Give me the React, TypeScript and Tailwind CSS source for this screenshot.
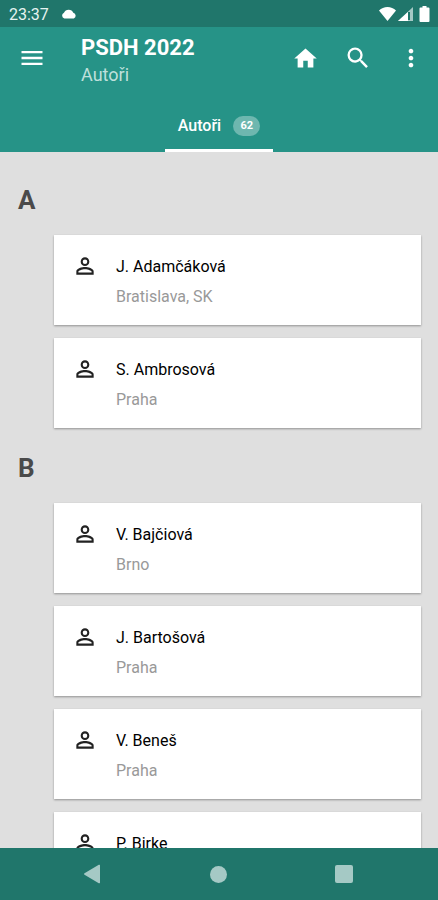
import { MdHome, MdMenu, MdMoreVert, MdPersonOutline, MdSearch } from "react-icons/md";

type Author = { name: string; place?: string };

const groups: { letter: string; authors: Author[] }[] = [
  {
    letter: "A",
    authors: [
      { name: "J. Adamčáková", place: "Bratislava, SK" },
      { name: "S. Ambrosová", place: "Praha" },
    ],
  },
  {
    letter: "B",
    authors: [
      { name: "V. Bajčiová", place: "Brno" },
      { name: "J. Bartošová", place: "Praha" },
      { name: "V. Beneš", place: "Praha" },
      { name: "P. Birke" },
    ],
  },
];

const StatusBar = () => {
  return (
    <div className="flex h-[27px] shrink-0 items-center bg-[#20766b] pl-[9px] pr-2 text-white">
      <span className="pt-[2px] text-base leading-5 text-[#e6f3f1]">23:37</span>
      <svg className="ml-3 h-[10px] w-4" viewBox="0 0 16 10" fill="currentColor">
        <path d="M3.4 9.500A3 3 0 0 1 3 3.800 5 5 0 0 1 12.300 3.800 3 3 0 0 1 12.800 9.500Z" />
      </svg>
      <div className="ml-auto flex items-center gap-[2px]">
        <svg className="h-4 w-[17px]" viewBox="0 0 17 16" fill="currentColor">
          <path d="M8.500 15 0 4.500C2.300 2.200 5.200 1 8.500 1S14.700 2.200 17 4.500Z" />
        </svg>
        <svg className="h-4 w-[15px]" viewBox="0 0 15 16">
          <path d="M15 1v14H0Z" fill="#a5c9c5" />
          <path d="M10 6v9H0Z" fill="#fff" />
          <path d="M11 6v8" stroke="#20766b" strokeWidth="2" />
        </svg>
        <svg className="ml-1 h-4 w-[11px]" viewBox="0 0 11 16" fill="currentColor">
          <path d="M3.500 0h4v1.500H9.500A1 1 0 0 1 10.500 2.500V15a1 1 0 0 1-1 1h-8a1 1 0 0 1-1-1V2.500a1 1 0 0 1 1-1h2Z" />
        </svg>
      </div>
    </div>
  );
};

const Header = () => {
  return (
    <header className="shrink-0 bg-[#269387] text-white">
      <div className="flex h-[74px] items-start pl-[18px] pr-[13px] pt-[6px]">
        <button type="button" aria-label="Menu" className="mt-[11px]">
          <MdMenu className="size-7" />
        </button>
        <div className="ml-[35px]">
          <h1 className="text-[22px] font-bold leading-[30px]">PSDH 2022</h1>
          <p className="text-lg leading-6 text-[#bfe0dc]">Autoři</p>
        </div>
        <div className="ml-auto mt-[11px] flex items-center gap-[25px]">
          <button type="button" aria-label="Domů">
            <MdHome className="size-[27px]" />
          </button>
          <button type="button" aria-label="Hledat">
            <MdSearch className="size-7" />
          </button>
          <button type="button" aria-label="Další možnosti">
            <MdMoreVert className="size-7" />
          </button>
        </div>
      </div>
      <nav className="flex h-[51px] justify-center">
        <a
          href="#autori"
          className="flex items-center border-b-[3px] border-white px-[13px] pt-[2px] text-base font-medium"
        >
          Autoři
          <span className="ml-3 flex h-5 w-[27px] items-center justify-center rounded-full bg-[#6eb7af] text-[11px] font-bold">
            62
          </span>
        </a>
      </nav>
    </header>
  );
};

const AuthorCard = ({ name, place }: Author) => {
  return (
    <li className="flex h-[90px] items-start bg-white pl-[18px] pt-[18px] shadow-[0_1px_2px_rgba(0,0,0,0.35)]">
      <MdPersonOutline className="size-[26px] shrink-0 text-[#222222]" />
      <div className="ml-[18px] pt-px text-base">
        <p className="leading-[26px] text-black">{name}</p>
        {place && <p className="mt-1 leading-[26px] text-[#999999]">{place}</p>}
      </div>
    </li>
  );
};

const NavigationBar = () => {
  return (
    <div className="flex h-[52px] shrink-0 items-center justify-around bg-[#20766b] pl-7 pr-[31px] text-[#a5c9c5]">
      <button type="button" aria-label="Zpět">
        <svg className="size-5" viewBox="0 0 20 20" fill="currentColor">
          <path d="M18 1.500v17a.8.8 0 0 1-1.200.7L2.500 10.700a.8.8 0 0 1 0-1.400L16.800.8a.8.8 0 0 1 1.200.7Z" />
        </svg>
      </button>
      <button type="button" aria-label="Domovská obrazovka" className="size-[17px] rounded-full bg-[#a5c9c5]" />
      <button type="button" aria-label="Přehled" className="size-[18px] rounded-xs bg-[#a5c9c5]" />
    </div>
  );
};

const App = () => {
  return (
    <div className="flex h-screen flex-col bg-[#dfdfdf] font-[Roboto,sans-serif]">
      <StatusBar />
      <Header />
      <main
        id="autori"
        className="min-h-0 flex-1 overflow-y-auto pl-[18px] pr-[17px] pt-2 [scrollbar-width:none]"
      >
        {groups.map((group) => (
          <section key={group.letter}>
            <h2 className="pb-[17px] pt-[23px] text-[26px] font-bold leading-[35px] text-[#4a4a4a]">
              {group.letter}
            </h2>
            <ul className="ml-9 flex flex-col gap-[13px]">
              {group.authors.map((author) => (
                <AuthorCard key={author.name} {...author} />
              ))}
            </ul>
          </section>
        ))}
      </main>
      <NavigationBar />
    </div>
  );
};

export default App;
